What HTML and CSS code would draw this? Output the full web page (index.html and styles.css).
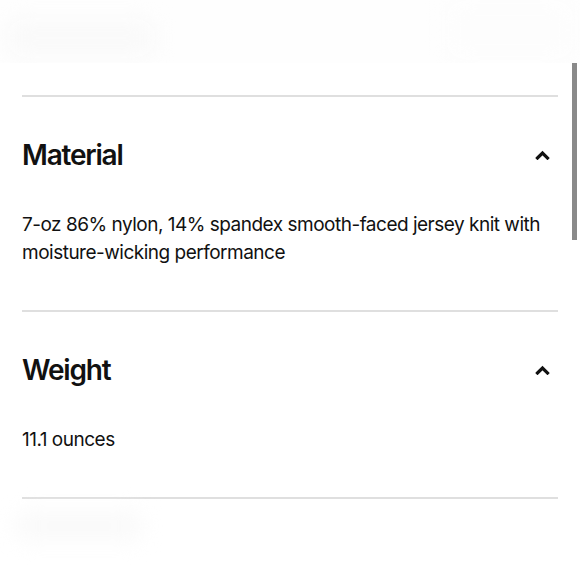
FILE: index.html
```html
<!DOCTYPE html>
<html lang="en">
<head>
<meta charset="utf-8">
<link rel="stylesheet" href="styles.css">
</head>
<body>
<div class="topbar">
  <div class="blob blob-a"></div>
  <div class="blob blob-b"></div>
</div>
<div class="content">
  <section class="acc">
    <div class="acc-head">
      <h2 class="acc-title">Material</h2>
      <svg class="chev" width="15" height="10" viewBox="0 0 15 10"><path d="M2.5 8 L7.5 3 L12.5 8" fill="none" stroke="#111" stroke-width="3.2" stroke-linecap="square"/></svg>
    </div>
    <p class="acc-body">7-oz 86% nylon, 14% spandex smooth-faced jersey knit with moisture-wicking performance</p>
  </section>
  <section class="acc">
    <div class="acc-head">
      <h2 class="acc-title">Weight</h2>
      <svg class="chev" width="15" height="10" viewBox="0 0 15 10"><path d="M2.5 8 L7.5 3 L12.5 8" fill="none" stroke="#111" stroke-width="3.2" stroke-linecap="square"/></svg>
    </div>
    <p class="acc-body">11.1 ounces</p>
  </section>
  <div class="rule"></div>
  <div class="bottom-fade"><div class="blob blob-c"></div></div>
</div>
<div class="scrollbar"></div>
</body>
</html>
```

FILE: styles.css
```css
html, body {
  margin: 0;
  padding: 0;
  background: #ffffff;
  overflow: hidden;
}
body {
  font-family: Inter, "Noto Sans", sans-serif;
  color: #111;
  width: 580px;
  height: 580px;
  position: relative;
}
.topbar {
  height: 63px;
  background: #fefefe;
  position: relative;
  overflow: hidden;
}
.blob {
  position: absolute;
  background: #fafafa;
  filter: blur(10px);
  border-radius: 14px;
}
.blob-a { left: 6px; top: 18px; width: 150px; height: 40px; }
.blob-b { left: 445px; top: 0; width: 130px; height: 60px; background: #fdfdfd; }
.content {
  padding: 32px 22px 0 22px;
}
.acc {
  border-top: 2px solid #dfdfdf;
  padding: 40px 0 0 0;
}
.acc-head {
  display: flex;
  align-items: center;
  justify-content: space-between;
  height: 36px;
  padding-right: 8px;
}
.acc-title {
  margin: 0;
  font-size: 28px;
  font-weight: 600;
  letter-spacing: -1.2px;
  line-height: 36px;
}
.chev { display: block; }
.acc-body {
  margin: 38px 0 0 0;
  font-size: 19px;
  line-height: 28px;
  font-weight: 400;
  letter-spacing: -0.5px;
  padding-bottom: 43px;
}
.rule {
  border-top: 2px solid #dfdfdf;
}
.bottom-fade {
  position: relative;
  height: 80px;
}
.blob-c { left: -8px; top: 12px; width: 130px; height: 30px; }
.scrollbar {
  position: absolute;
  left: 572px;
  top: 63px;
  width: 5px;
  height: 177px;
  background: #8a8a8a;
}
```
